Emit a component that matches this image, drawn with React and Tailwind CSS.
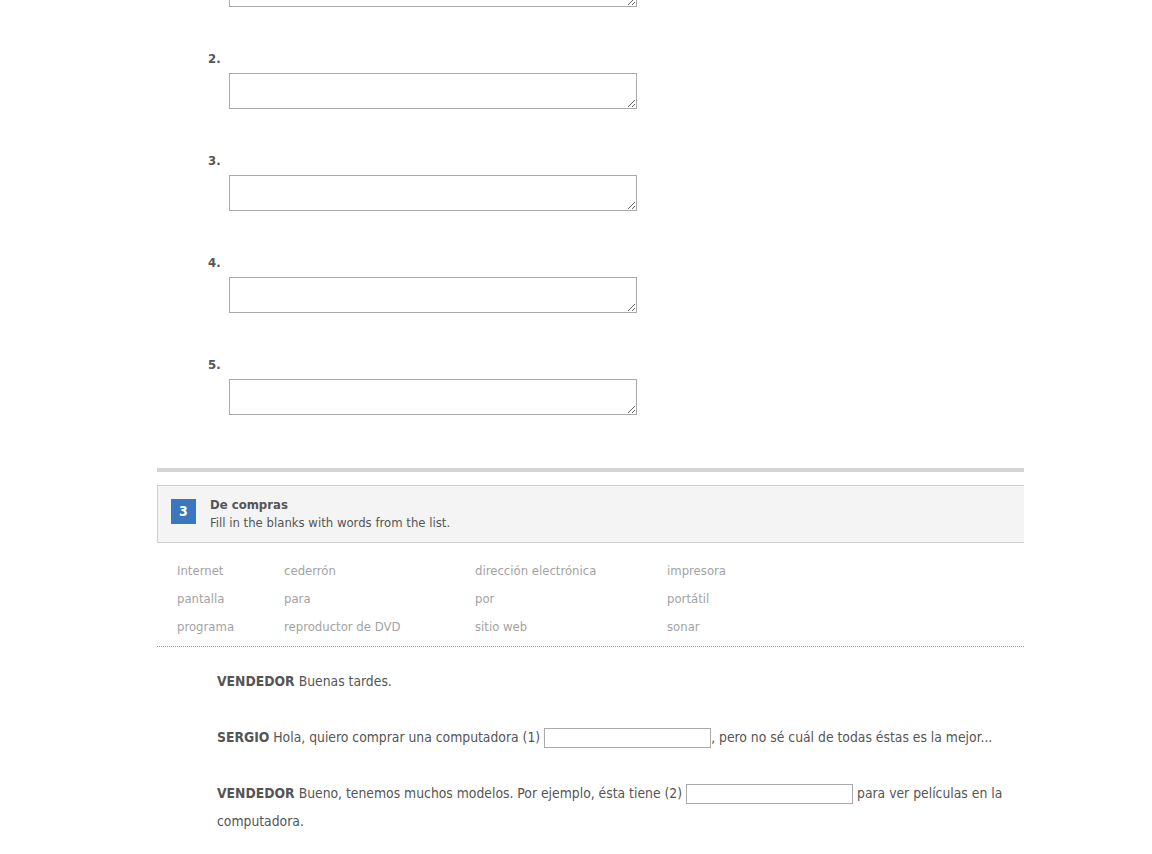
import React from "react";

const answers = [1, 2, 3, 4, 5];

const wordBank = [
  ["Internet", "cederrón", "dirección electrónica", "impresora"],
  ["pantalla", "para", "por", "portátil"],
  ["programa", "reproductor de DVD", "sitio web", "sonar"],
];

const Blank = () => (
  <input
    type="text"
    className="inline-block h-[20px] w-[167px] border border-[#aaaaaa] bg-white align-middle outline-none"
  />
);

const App = () => {
  return (
    <div
      className="min-h-screen bg-white text-[13px] text-[#555555]"
      style={{ fontFamily: '"DejaVu Sans Condensed", "DejaVu Sans", sans-serif' }}
    >
      <div className="ml-[157px] w-[867px]">
        {/* Answer boxes */}
        <div className="-mt-[53px]">
          {answers.map((n) => (
            <div key={n} className={n < 5 ? "mb-[42px]" : ""}>
              <div className="ml-[51px] h-[20px] font-bold leading-[20px]">{n}.</div>
              <textarea className="ml-[72px] mt-[4px] block h-[36px] w-[408px] border border-[#aaaaaa] bg-white outline-none" />
            </div>
          ))}
        </div>

        <div className="mt-[53px] h-[4px] bg-[#d4d4d4]" />

        {/* Activity header */}
        <div className="mt-[13px] flex h-[58px] items-start gap-[14px] border-y border-l border-[#d0d0d0] bg-[#f4f4f4] pl-[13px] pt-[13px]">
          <div className="flex h-[25px] w-[25px] items-center justify-center bg-[#3a77bf] text-[14px] font-bold text-white">
            3
          </div>
          <div className="-mt-[3px] leading-[18px]">
            <div className="font-bold">De compras</div>
            <div>Fill in the blanks with words from the list.</div>
          </div>
        </div>

        {/* Word list */}
        <div className="mt-[14px] border-b border-dotted border-[#999999] pb-[5px] pl-[20px]">
          {wordBank.map((row, i) => (
            <div key={i} className="grid grid-cols-[107px_191px_192px_1fr] leading-[28px] text-[#a3a3a3]">
              {row.map((w) => (
                <div key={w}>{w}</div>
              ))}
            </div>
          ))}
        </div>

        {/* Dialogue */}
        <div className="mt-[20px] pl-[60px] pr-[10px] text-[13.8px] leading-[28px]">
          <p className="mb-[28px]">
            <b>VENDEDOR</b> Buenas tardes.
          </p>
          <p className="mb-[28px]">
            <b>SERGIO</b> Hola, quiero comprar una computadora (1){" "}
            <Blank />, pero no sé cuál de todas éstas es la mejor...
          </p>
          <p className="mb-[28px]">
            <b>VENDEDOR</b> Bueno, tenemos muchos modelos. Por ejemplo, ésta tiene (2){" "}
            <Blank /> para ver películas en la computadora.
          </p>
        </div>
      </div>
    </div>
  );
};

export default App;
